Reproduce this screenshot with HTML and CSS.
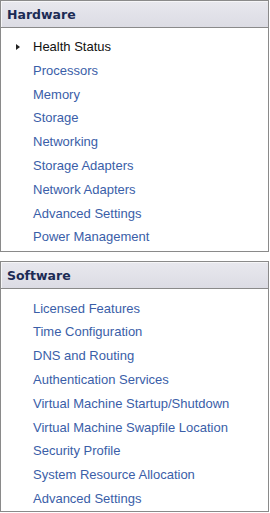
FILE: index.html
```html
<!DOCTYPE html>
<html>
<head>
<meta charset="utf-8">
<link rel="stylesheet" href="styles.css">
</head>
<body>
<div class="page">
  <section class="panel panel-hw">
    <div class="panel-header">Hardware</div>
    <ul class="items">
      <li class="item current"><span class="arrow"></span>Health Status</li>
      <li class="item"><a>Processors</a></li>
      <li class="item"><a>Memory</a></li>
      <li class="item"><a>Storage</a></li>
      <li class="item"><a>Networking</a></li>
      <li class="item"><a>Storage Adapters</a></li>
      <li class="item"><a>Network Adapters</a></li>
      <li class="item"><a>Advanced Settings</a></li>
      <li class="item"><a>Power Management</a></li>
    </ul>
  </section>
  <section class="panel panel-sw">
    <div class="panel-header">Software</div>
    <ul class="items">
      <li class="item"><a>Licensed Features</a></li>
      <li class="item"><a>Time Configuration</a></li>
      <li class="item"><a>DNS and Routing</a></li>
      <li class="item"><a>Authentication Services</a></li>
      <li class="item"><a>Virtual Machine Startup/Shutdown</a></li>
      <li class="item"><a>Virtual Machine Swapfile Location</a></li>
      <li class="item"><a>Security Profile</a></li>
      <li class="item"><a>System Resource Allocation</a></li>
      <li class="item"><a>Advanced Settings</a></li>
    </ul>
  </section>
</div>
</body>
</html>
```
FILE: styles.css
```css
html, body {
  margin: 0;
  padding: 0;
  background: #ffffff;
}
.page {
  width: 269px;
  display: flex;
  flex-direction: column;
  gap: 9px;
  font-family: "Liberation Sans", Arial, sans-serif;
}
.panel {
  border: 1px solid #8a8a8a;
  background: #ffffff;
}
.panel-header {
  height: 27px;
  box-sizing: border-box;
  padding: 6px 0 0 6px;
  background: linear-gradient(#e8e8ee, #dcdce4);
  border-bottom: 1px solid #8a8a8a;
  color: #1c2b55;
  font-family: "DejaVu Sans", Verdana, sans-serif;
  font-weight: bold;
  font-size: 12.5px;
  line-height: 16px;
  box-shadow: inset 1px 1px 0 #f6f6f8;
}
.items {
  list-style: none;
  margin: 0;
  padding: 7px 0 2px 32px;
}
.panel-sw .items {
  padding-top: 7.5px;
  padding-bottom: 0;
}
.item {
  height: 23.8px;
  line-height: 23.8px;
  font-size: 13px;
  color: #3a5ea8;
  position: relative;
}
.item a {
  color: #3a5ea8;
}
.item.current {
  color: #111111;
}
.arrow {
  position: absolute;
  left: -17px;
  top: 9px;
  width: 0;
  height: 0;
  border-top: 3px solid transparent;
  border-bottom: 3px solid transparent;
  border-left: 4px solid #222222;
}
```
